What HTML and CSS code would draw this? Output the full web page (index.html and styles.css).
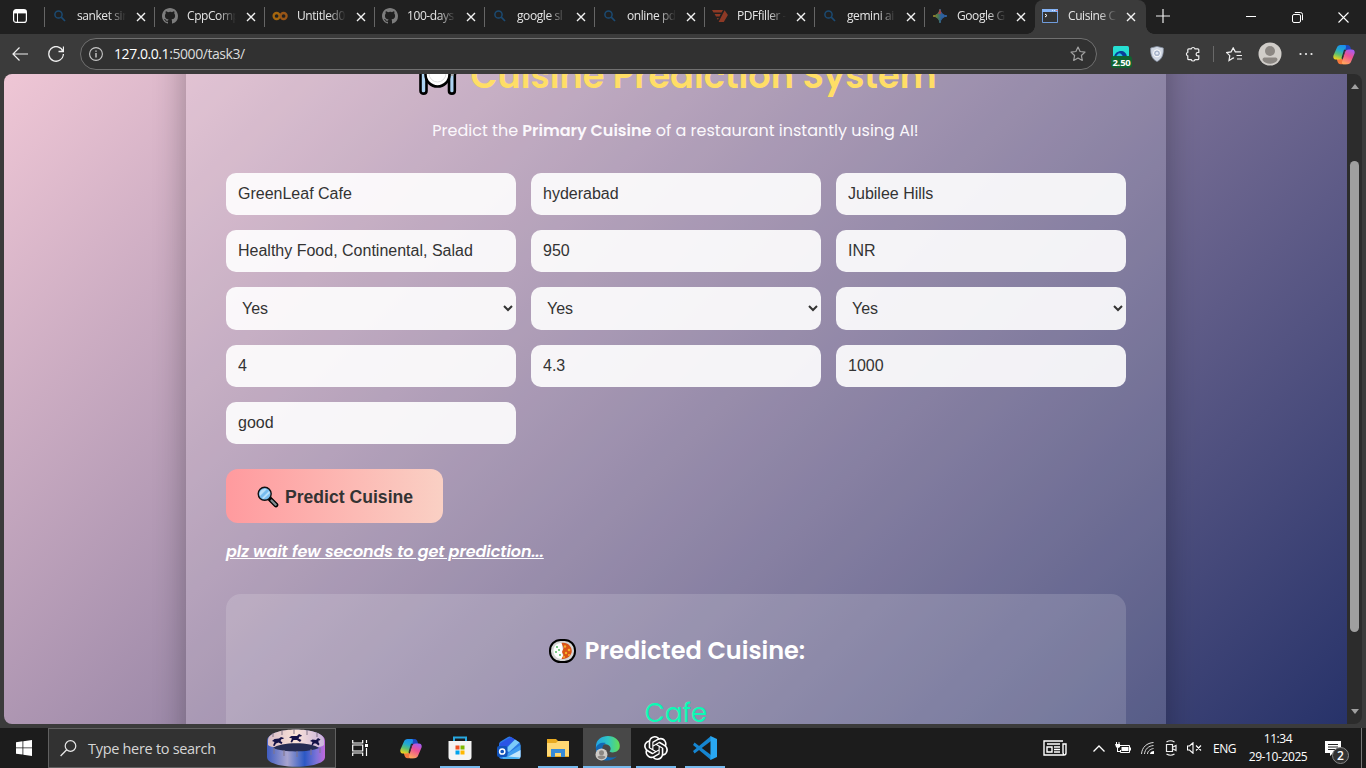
FILE: index.html
```html
<!DOCTYPE html>
<html lang="en">
<head>
<meta charset="utf-8">
<title>Cuisine Prediction System</title>
<link rel="stylesheet" href="styles.css">
</head>
<body>
<svg class="defs" aria-hidden="true">
  <defs>
    <linearGradient id="cpA" x1=".6" y1="0" x2=".3" y2="1"><stop offset="0" stop-color="#1b8fee"/><stop offset=".35" stop-color="#22a9cf"/><stop offset=".65" stop-color="#5cc072"/><stop offset="1" stop-color="#f2d31b"/></linearGradient>
    <linearGradient id="cpB" x1=".7" y1="0" x2=".3" y2="1"><stop offset="0" stop-color="#a45cf2"/><stop offset=".45" stop-color="#ee5093"/><stop offset="1" stop-color="#ffa45e"/></linearGradient>
    <linearGradient id="edgeG" x1="0" y1=".5" x2="1" y2=".5"><stop offset="0" stop-color="#23a4e4"/><stop offset=".5" stop-color="#2fc5c4"/><stop offset="1" stop-color="#65df52"/></linearGradient>
    <linearGradient id="gem" x1="0" y1="0" x2="1" y2="0"><stop offset="0" stop-color="#a88a22"/><stop offset=".35" stop-color="#4b7a52"/><stop offset=".6" stop-color="#2c5f9f"/><stop offset="1" stop-color="#3164a8"/></linearGradient>
    <linearGradient id="drum" x1="0" y1="0" x2="1" y2="0"><stop offset="0" stop-color="#3f5cc0"/><stop offset=".35" stop-color="#a8a4cf"/><stop offset=".65" stop-color="#2b58c4"/><stop offset=".85" stop-color="#7b73d8"/><stop offset="1" stop-color="#c268dc"/></linearGradient>
    <linearGradient id="drumTop" x1="0" y1="0" x2="1" y2="0"><stop offset="0" stop-color="#d9bcc6"/><stop offset=".5" stop-color="#fae3d8"/><stop offset="1" stop-color="#c9b3dc"/></linearGradient>
  </defs>
  <symbol id="magnify" viewBox="0 0 16 16"><circle cx="6.500" cy="6.500" r="3.600" fill="none" stroke="#1b4a72" stroke-width="1.500"/><path d="M9.200 9.200l3.800 3.800" stroke="#1b4a72" stroke-width="1.700"/></symbol>
  <symbol id="github" viewBox="0 0 16 16"><path fill="#7d7d7d" d="M8 0C3.58 0 0 3.58 0 8c0 3.54 2.29 6.53 5.47 7.59.4.07.55-.17.55-.38v-1.49c-2.01.37-2.53-.49-2.69-.94-.09-.23-.48-.94-.82-1.13-.28-.15-.68-.52-.01-.53.63-.01 1.08.58 1.23.82.72 1.21 1.87.87 2.33.66.07-.52.28-.87.51-1.07-1.78-.2-3.64-.89-3.64-3.95 0-.87.31-1.59.82-2.15-.08-.2-.36-1.02.08-2.12 0 0 .67-.21 2.2.82A7.6 7.6 0 0 1 8 3.86c.68 0 1.36.09 2 .27 1.53-1.04 2.2-.82 2.2-.82.44 1.1.16 1.92.08 2.12.51.56.82 1.27.82 2.15 0 3.07-1.87 3.75-3.65 3.95.29.25.54.73.54 1.48v2.2c0 .21.15.46.55.38A8 8 0 0 0 16 8c0-4.42-3.58-8-8-8z"/></symbol>
  <symbol id="close" viewBox="0 0 10 10"><path d="M1 1l8 8M9 1L1 9" stroke="#f4f4f4" stroke-width="1.4" fill="none"/></symbol>
  <symbol id="copilot" viewBox="0 0 24 22">
    <path d="M9 .5h6.500c2.600 0 3.200 1.500 3.700 3.200L20 6.500h-4.500C12 6.500 12 2 9 .5z" fill="#1c48c0"/>
    <path d="M15 21.500H8.500c-2.600 0-3.200-1.500-3.700-3.200L4 15.500h4.500c3.500 0 3.500 4.500 6.500 6z" fill="#f4793c"/>
    <path d="M4.200 3.500C5 1.500 6.300.5 8.200.5h4.500c1.300 0 1.800 1.200 1.300 3l-3 9.700c-.7 2-1.800 3.300-4.200 3.300H3.500C.7 16.500-.2 14.200.6 11.700z" fill="url(#cpA)"/>
    <path d="M19.800 18.500c-.8 2-2.100 3-4 3h-4.500c-1.300 0-1.800-1.200-1.300-3l3-9.700c.7-2 1.800-3.300 4.200-3.300h3.300c2.800 0 3.700 2.300 2.900 4.800z" fill="url(#cpB)"/>
    <path d="M12.700 5.800l-2.800 9.500" stroke="#2b2430" stroke-width="1.300"/>
  </symbol>
</svg>

<header class="tabstrip">
  <div class="workspace"><svg width="14" height="14" viewBox="0 0 14 14"><rect x=".6" y=".6" width="12.8" height="12.8" rx="2.5" fill="none" stroke="#fff" stroke-width="1.2"/><path d="M1 1h12v3.4H1z" fill="#fff"/><path d="M4.5 4v9" stroke="#fff"/></svg></div>
  <div class="tab"><svg class="fav"><use href="#magnify"/></svg><span class="tab-title">sanket sin</span><svg class="x"><use href="#close"/></svg></div>
  <div class="tab"><svg class="fav"><use href="#github"/></svg><span class="tab-title">CppComp</span><svg class="x"><use href="#close"/></svg></div>
  <div class="tab"><svg class="fav" viewBox="0 0 16 16"><g fill="none" stroke-width="2.3"><circle cx="4.6" cy="8" r="3" stroke="#a5660d"/><circle cx="11.6" cy="8" r="3" stroke="#985517"/></g></svg><span class="tab-title">Untitled0</span><svg class="x"><use href="#close"/></svg></div>
  <div class="tab"><svg class="fav"><use href="#github"/></svg><span class="tab-title">100-days</span><svg class="x"><use href="#close"/></svg></div>
  <div class="tab"><svg class="fav"><use href="#magnify"/></svg><span class="tab-title">google sl</span><svg class="x"><use href="#close"/></svg></div>
  <div class="tab"><svg class="fav"><use href="#magnify"/></svg><span class="tab-title">online pd</span><svg class="x"><use href="#close"/></svg></div>
  <div class="tab"><svg class="fav" viewBox="0 0 16 16"><path d="M0 2h11L9.600 4.500H1.500zM2.600 6h6.200L7.500 8.400H4zM4.800 10h2L5.900 12zM12.600 2.200l3.300 4.900-4.100 7H6.600z" fill="#8d3925"/></svg><span class="tab-title">PDFfiller -</span><svg class="x"><use href="#close"/></svg></div>
  <div class="tab"><svg class="fav"><use href="#magnify"/></svg><span class="tab-title">gemini ai</span><svg class="x"><use href="#close"/></svg></div>
  <div class="tab"><svg class="fav" viewBox="0 0 16 16"><path d="M8 1C8.700 5.200 10.800 7.300 15 8 10.800 8.700 8.700 10.800 8 15 7.300 10.800 5.200 8.700 1 8 5.200 7.300 7.300 5.200 8 1z" fill="url(#gem)" stroke="url(#gem)"/><path d="M8 1L9.500 5.500 6 6z" fill="#a94242"/></svg><span class="tab-title">Google G</span><svg class="x"><use href="#close"/></svg></div>
  <div class="tab active"><svg class="fav" viewBox="0 0 16 16"><path d="M.5 1.500h15v13H.5z" fill="#333" stroke="#6f9cdc"/><path d="M0 1h16v3H0z" fill="#84b2f4"/><path d="M10 2.500h1m1 0h1" stroke="#dce9ff"/><path d="M14 2h1.500v1H14z" fill="#e87070"/><path d="M3 6l2 1.500L3 9" stroke="#fff" fill="none"/></svg><span class="tab-title">Cuisine C</span><svg class="x"><use href="#close"/></svg></div>
  <div class="newtab"><svg width="14" height="14"><path d="M7 0v14M0 7h14" stroke="#eee" stroke-width="1.200"/></svg></div>
  <div class="winbtns">
    <span><svg width="10" height="10"><path d="M0 4.500h10" stroke="#fff"/></svg></span>
    <span><svg width="11" height="11"><rect x=".5" y="2.500" width="8" height="8" rx="1.500" fill="none" stroke="#fff"/><path d="M2.800.5h5.700a2 2 0 0 1 2 2v5.700" fill="none" stroke="#fff"/></svg></span>
    <span><svg width="11" height="11"><path d="M.5.5l10 10M10.500.5l-10 10" stroke="#fff" stroke-width="1.100"/></svg></span>
  </div>
</header>

<nav class="toolbar">
  <span class="tool nav"><svg width="16" height="14"><path d="M16 7H1M7.500.5L1 7l6.500 6.500" fill="none" stroke="#f0f0f0" stroke-width="1.200"/></svg></span>
  <span class="tool nav"><svg width="16" height="16"><path d="M15 5.500A7.300 7.300 0 1 0 15.400 8M15.500 .5v5h-5" fill="none" stroke="#f0f0f0" stroke-width="1.300"/></svg></span>
  <div class="address">
    <svg width="14" height="14"><circle cx="7" cy="7" r="6.400" fill="none" stroke="#c7c7c7" stroke-width="1.100"/><path d="M7 6v4.500M7 3.500v1.300" stroke="#d5d5d5" stroke-width="1.300"/></svg>
    <span class="url"><b>127.0.0.1</b>:5000/task3/</span>
    <svg class="star" width="16" height="16"><path d="M8 1l2.100 4.500 4.900.6-3.600 3.400.9 4.900L8 12l-4.300 2.400.9-4.900L1 6.100l4.900-.6z" fill="none" stroke="#a2a2a2" stroke-width="1.200" stroke-linejoin="round"/></svg>
  </div>
  <span class="tool ext"><svg width="16" height="16"><rect width="16" height="16" rx="1.500" fill="#26dfd2"/><path d="M1 11c1-7 12-9 13 0z" fill="#0b3f9a"/><path d="M3 11c2-5 5-5 7 0z" fill="#22c4e0"/></svg><em class="badge">2.50</em></span>
  <span class="tool"><svg width="14" height="16"><path d="M7 .4L13.300 2c.4 6-1 11-6.300 13.600C1.700 13 .3 8 .7 2z" fill="#d0d7e3" stroke="#848e9f" stroke-width=".8"/><circle cx="7" cy="7.300" r="3.500" fill="#a9b5cb" stroke="#fff"/><circle cx="7" cy="7.300" r="1.300" fill="#e6ebf5"/></svg></span>
  <span class="tool"><svg width="16" height="16"><path d="M3.800 2.800h2.400a2 1.900 0 0 1 3.800 0h2.800q1 0 1 1v2.700h-1a1.700 1.700 0 0 0 0 3.400h1v2.800q0 1-1 1H10a2 1.900 0 0 1-3.800 0H3.800q-1 0-1-1V10a2 2 0 0 1 0-3.800V3.800q0-1 1-1z" fill="none" stroke="#f0f0f0" stroke-width="1.200"/></svg></span>
  <span class="split"></span>
  <span class="tool"><svg width="16" height="15"><path d="M8 11.300L7.200 10.900 3 13.500l.8-4.800L.7 5.600l4.400-.7L7.200.9l2.100 4H15M10.500 8.500H16M11 12H16" fill="none" stroke="#f0f0f0" stroke-width="1.200"/></svg></span>
  <span class="tool"><svg width="24" height="24"><circle cx="12" cy="12" r="11.500" fill="#d0cdc9"/><circle cx="12" cy="9" r="5" fill="#8b8783"/><path d="M4.500 18c0-2.300 1-2.500 3-2.500h9c2 0 3 .2 3 2.500-3 5-12 5-15 0z" fill="#8b8783"/></svg></span>
  <span class="tool"><svg width="14" height="4"><g fill="#eee"><circle cx="1.500" cy="2" r="1.100"/><circle cx="7" cy="2" r="1.100"/><circle cx="12.500" cy="2" r="1.100"/></g></svg></span>
  <span class="tool last"><svg class="copilot"><use href="#copilot"/></svg></span>
</nav>

<div class="view">
  <main class="page">
    <section class="card">
      <h1><svg class="plate" viewBox="0 0 38 40"><g stroke="#000" stroke-width="2.600"><path d="M1.500 8c0-5 6-5 6 0v28c0 3.500-6 3.500-6 0z" fill="#add4f2"/><path d="M30 8c0-5 7-5 7 0v8l-1.200 4v16c0 3.500-5.800 3.500-5.800 0z" fill="#add4f2"/><circle cx="18.500" cy="19.500" r="12" fill="#fff"/></g><path d="M32 12l4 1-2 8h-2z" fill="#aaa"/><circle cx="18.500" cy="18.500" r="8.500" fill="#fff" stroke="#ddd"/></svg><span>Cuisine Prediction System</span></h1>
      <p class="lead">Predict the <strong>Primary Cuisine</strong> of a restaurant instantly using AI!</p>
      <form class="fields">
        <input value="GreenLeaf Cafe"><input value="hyderabad"><input value="Jubilee Hills">
        <input value="Healthy Food, Continental, Salad"><input value="950"><input value="INR">
        <select><option>Yes</option></select><select><option>Yes</option></select><select><option>Yes</option></select>
        <input value="4"><input value="4.3"><input value="1000">
        <input value="good">
      </form>
      <button class="predict"><svg width="22" height="22"><path d="M13 13l6 6" stroke="#000" stroke-width="4.600" stroke-linecap="round"/><path d="M14.500 14.500l4.200 4.200" stroke="#7f8d91" stroke-width="2.300" stroke-linecap="round"/><circle cx="7.700" cy="7.800" r="6.500" fill="#78bdf0" stroke="#111" stroke-width="1.400"/><path d="M3 10L10 3a5.500 5.500 0 0 0-7 7zM5 12l7-7 1 2-6.500 6z" fill="#b8e0fb"/></svg><span>Predict Cuisine</span></button>
      <p class="wait"><span>plz wait few seconds to get prediction...</span></p>
      <section class="result">
        <h2><svg width="27" height="24"><rect x="1" y="1" width="25" height="22" rx="10.500" fill="#d5d5d5" stroke="#000" stroke-width="2"/><path d="M13 4C7 3.500 4.500 8 4.500 12s3 8 8.500 8l1-3-1-3 1-3-1-3z" fill="#fff"/><path d="M12.500 4C19 3 22.800 8 22.800 12s-4 8.500-10.300 8l2-4-1.500-3 1.500-4z" fill="#d95417"/><g fill="#f6b32c"><circle cx="16" cy="7.500" r="1.200"/><circle cx="20" cy="11" r="1.300"/><circle cx="17" cy="14" r="1.200"/><circle cx="15" cy="18" r="1"/><circle cx="20" cy="16" r="1"/></g><g fill="#43b653"><circle cx="8" cy="8" r=".9"/><circle cx="7" cy="13" r=".9"/><circle cx="10" cy="11" r=".9"/><circle cx="11" cy="16" r=".9"/></g></svg><span>Predicted Cuisine:</span></h2>
        <p class="answer">Cafe</p>
      </section>
    </section>
  </main>
  <div class="scrollbar"><i class="up"></i><div class="track"><div class="thumb"></div></div><i class="down"></i></div>
</div>

<footer class="taskbar">
  <span class="start"><svg width="16" height="16"><path d="M0 2.200L6.500 1.300v6.200H0zM7.300 1.200L16 0v7.500H7.300zM0 8.300h6.500v6.300L0 13.700zM7.300 8.300H16V16l-8.700-1.200z" fill="#fff"/></svg></span>
  <div class="search">
    <svg width="17" height="17"><circle cx="10.500" cy="6" r="5.300" fill="none" stroke="#e8e8e8" stroke-width="1.200"/><path d="M6.700 9.800L.6 16" stroke="#e8e8e8" stroke-width="1.300"/></svg>
    <span>Type here to search</span>
    <svg class="carousel" width="58" height="38" viewBox="0 0 58 38"><path d="M0 12C0-3 58-3 58 12v16c0 13-58 13-58 0z" fill="url(#drum)"/><path d="M1 11C1-3 57-3 57 11v5c-5 5-51 5-56 0z" fill="url(#drumTop)"/><path d="M6 19c7-6.500 39-6.500 46 0-10 4.500-36 4.500-46 0z" fill="#252c53"/><g stroke="#817587"><path d="M27 0v5M6 4v4M15 1v5M40 1v5M50 4v4M17 21v6M30 22v6M44 20v6M7 19v6M53 19v5"/></g><g fill="#141247"><path d="M0 3.500L2.500 2 8 2 10 0l3 1.500-1 1-1.500 0-1 2 3 1.500-1.500 2L8 6 4.500 6 3 8.500 1.500 8 3 4.500z" transform="translate(22 5)"/><path d="M0 4L2.500 2 7 1.500 9 0l3 1-1 1-1.500 0-1 2 2 1.500-1 1.500L6.500 5.500 4 6.500 2.500 9 1 8.500 2.500 5z" transform="translate(5 8)"/><path d="M0 3L2.500 1.500 6 2 8 0l2.500 1.500-1 1-1 0 0 2 1 1.500-1 1.500L6 5.500 4 5.500 2.500 7.500 1.500 7 2.500 4z" transform="translate(43 9)"/></g></svg>
  </div>
  <span class="taskview"><svg width="17" height="16"><path d="M.7 0v3h10V0M.7 16v-3h10v3M.7 5h10v6H.7zM14.500 0v3M14.500 8v8" fill="none" stroke="#fff" stroke-width="1.200"/><path d="M13 4h3v3h-3z" fill="#fff"/></svg></span>
  <div class="apps">
    <span class="app"><svg class="copilot"><use href="#copilot"/></svg></span>
    <span class="app open"><svg width="24" height="24"><path d="M6 6V1.500h12V6" fill="none" stroke="#28a8df" stroke-width="2"/><path d="M.5 5h23v16q0 3-3 3h-17q-3 0-3-3z" fill="#f4f4f4"/><path d="M7.500 9.500h4v4h-4z" fill="#ef5023"/><path d="M12.500 9.500h4v4h-4z" fill="#7fb900"/><path d="M7.500 14.500h4v4h-4z" fill="#00a3ed"/><path d="M12.500 14.500h4v4h-4z" fill="#ffb800"/></svg></span>
    <span class="app"><svg width="24" height="24"><path d="M2 8q0-1.500 1.500-2.500L11 1q1.500-1 3 0l8 5q1.500 1 1.500 3v11q0 3-3 3H5q-3 0-3-3z" fill="#2b7be4"/><path d="M2 8L14 1l4 2.500L6 14z" fill="#2a55e6"/><path d="M8 14L18 3.500l4.500 3L12 16z" fill="#7ccbfa"/><path d="M23.500 9v11q0 3-3 3H9l-2-3z" fill="#3f9df0"/><path d="M23.500 14v6q0 3-3 3H7z" fill="#c3e6fc"/><path d="M5 20l18 1.500q-1 1.500-3 1.500H6z" fill="#49b0f2"/><rect y="10" width="10.500" height="11" rx="2" fill="#1153bb"/><circle cx="5.200" cy="15.500" r="2.600" fill="none" stroke="#fff" stroke-width="1.500"/></svg></span>
    <span class="app open"><svg width="22" height="18"><path d="M0 0h9l2 2h11v16H0z" fill="#e9aa20"/><path d="M0 4h9l2-2h11v15H0z" fill="#ffd873"/><path d="M4 18v-8h14v8h-4v-4H8v4z" fill="#378bd8"/></svg></span>
    <span class="app current"><svg width="25" height="25"><path d="M1 13C0 4 6 0 13 0c8 0 13 6 11.500 12-1 4-7 5.500-10 3.500 2-2 1.500-6-2.500-7C7 7.500 2 9 1 13z" fill="url(#edgeG)"/><path d="M1 12c1-4 5-6 10-5-5 2-5 10 0 13 4 2 8 2 11 0-5 7-22 7-21-8z" fill="#1269b5"/><circle cx="6.500" cy="18.500" r="6" fill="#cecac6"/><circle cx="6.500" cy="16.800" r="2.500" fill="#8c8783"/><path d="M2.500 21c1-2 7-2 8 0-2 3-6 3-8 0z" fill="#8c8783"/></svg></span>
    <span class="app open"><svg width="24" height="24" viewBox="0 0 24 24"><path fill="#fff" d="M22.2819 9.8211a5.9847 5.9847 0 0 0-.5157-4.9108 6.0462 6.0462 0 0 0-6.5098-2.9A6.0651 6.0651 0 0 0 4.9807 4.1818a5.9847 5.9847 0 0 0-3.9977 2.9 6.0462 6.0462 0 0 0 .7427 7.0966 5.98 5.98 0 0 0 .511 4.9107 6.051 6.051 0 0 0 6.5146 2.9001A5.9847 5.9847 0 0 0 13.2599 24a6.0557 6.0557 0 0 0 5.7718-4.2058 5.9894 5.9894 0 0 0 3.9977-2.9001 6.0557 6.0557 0 0 0-.7475-7.0729zm-9.022 12.6081a4.4755 4.4755 0 0 1-2.8764-1.0408l.1419-.0804 4.7783-2.7582a.7948.7948 0 0 0 .3927-.6813v-6.7369l2.02 1.1686a.071.071 0 0 1 .038.052v5.5826a4.504 4.504 0 0 1-4.4945 4.4944zm-9.6607-4.1254a4.4708 4.4708 0 0 1-.5346-3.0137l.142.0852 4.783 2.7582a.7712.7712 0 0 0 .7806 0l5.8428-3.3685v2.3324a.0804.0804 0 0 1-.0332.0615L9.74 19.9502a4.4992 4.4992 0 0 1-6.1408-1.6464zM2.3408 7.8956a4.485 4.485 0 0 1 2.3655-1.9728V11.6a.7664.7664 0 0 0 .3879.6765l5.8144 3.3543-2.0201 1.1685a.0757.0757 0 0 1-.071 0l-4.8303-2.7865A4.504 4.504 0 0 1 2.3408 7.872zm16.5963 3.8558L13.1038 8.364 15.1192 7.2a.0757.0757 0 0 1 .071 0l4.8303 2.7913a4.4944 4.4944 0 0 1-.6765 8.1042v-5.6772a.79.79 0 0 0-.407-.667zm2.0107-3.0231l-.142-.0852-4.7735-2.7818a.7759.7759 0 0 0-.7854 0L9.409 9.2297V6.8974a.0662.0662 0 0 1 .0284-.0615l4.8303-2.7866a4.4992 4.4992 0 0 1 6.6802 4.66zM8.3065 12.863l-2.02-1.1638a.0804.0804 0 0 1-.038-.0567V6.0742a4.4992 4.4992 0 0 1 7.3757-3.4537l-.142.0805L8.704 5.459a.7948.7948 0 0 0-.3927.6813zm1.0976-2.3654l2.602-1.4998 2.6069 1.4998v2.9994l-2.5974 1.4997-2.6067-1.4997Z"/></svg></span>
    <span class="app open"><svg width="24" height="24"><path d="M1.500 6.500L18 19v5L0 9z" fill="#1686d1"/><path d="M1.500 17.500L18 5V0L0 15z" fill="#1686d1"/><path d="M17.500 0L24 3v18l-6.500 3z" fill="#29a7f1"/></svg></span>
  </div>
  <div class="tray">
    <span class="news"><svg width="24" height="16"><path d="M20 1H1v14h20q2 0 2-2V4h-3v9q0 1 1 1M4 4h13M11 7h6M11 9.500h6M11 12h6" fill="none" stroke="#fff" stroke-width="1.400"/><path d="M4 7h5v5H4z" fill="none" stroke="#fff" stroke-width="1.400"/></svg></span>
    <span class="chev"><svg width="12" height="7"><path d="M.5 6.500L6 1l5.500 5.500" fill="none" stroke="#fff" stroke-width="1.300"/></svg></span>
    <span class="t"><svg width="17" height="12"><path d="M5 3.500h9.500v7H5.500V8" fill="none" stroke="#fff"/><path d="M6.500 5h7v4h-7zM15 5.500h1v3h-1zM0 2h5v3q-2.500 2-4 0zM1 0h1v2H1zM3.500 0h1v2h-1zM2 6h1v3h3v1H2z" fill="#fff"/></svg></span>
    <span class="t"><svg width="13" height="12"><g fill="none" stroke="#ddd"><path d="M.5 12C1 5 6 1 12.500.5M3.500 12c.5-5 4-8 9-8.500M6.500 12c0-3 3-5 6-5.500" /></g><path d="M9 12c0-2 2-3 4-3v3z" fill="#fff"/></svg></span>
    <span class="t"><svg width="12" height="16"><path d="M1.500 4.500h6v7h-6zM8 7l3-1.500v5L8 9M1.500 2q4-2.500 8 0M1.500 14q4 2.500 8 0" fill="none" stroke="#eee" stroke-width="1.200"/></svg></span>
    <span class="t"><svg width="15" height="12"><path d="M.5 4h2L6 .8v10.400L2.500 8h-2zM9 3.500l5 5M14 3.500l-5 5" fill="none" stroke="#fff" stroke-width="1.100"/></svg></span>
    <span class="lang">ENG</span>
    <span class="clock"><span class="hour">11:34</span><span>29-10-2025</span></span>
    <span class="notify"><svg width="16" height="15"><path d="M0 0h16v12H8l-3 3v-3H0z" fill="#fff"/><path d="M3 3.500h10M3 6h10M3 8.500h7" stroke="#222"/></svg><em>2</em></span>
    <span class="desk"></span>
  </div>
</footer>
</body>
</html>
```
FILE: styles.css
```css
* { box-sizing: border-box; }
body { margin: 0; width: 1366px; height: 768px; overflow: hidden; display: flex; flex-direction: column; background: #3b3b3b; color: #fff; font-family: "Segoe UI", "Open Sans", sans-serif; }
svg { display: block; flex: none; }
.defs { width: 0; height: 0; position: absolute; }

.tabstrip { height: 34px; flex: none; display: flex; background: #202020; }
.workspace { width: 45px; padding: 9px 0 0 13px; }
.tab { width: 110px; display: flex; align-items: center; padding: 0 0 2px 7px; position: relative; }
.tab::before { content: ""; position: absolute; left: -1px; top: 7px; width: 1px; height: 20px; background: #666; }
.fav { width: 16px; height: 16px; margin-right: 9px; }
.tab-title { width: 50px; white-space: nowrap; font-size: 12px; letter-spacing: -.42px; line-height: 20px; color: #e5e5e5; mask-image: linear-gradient(90deg, #000 62%, transparent 98%); }
.x { width: 10px; height: 10px; margin-left: 8.5px; margin-top: 1px; }
.tab.active { width: 111px; border-radius: 8px 8px 0 0; background: #3b3b3b; }
.active .fav { margin-right: 10px; }
.active .x { margin-left: 7.5px; }
.tab.active::before { left: -8px; top: 26px; width: 8px; height: 8px; background: radial-gradient(circle at 0 0, transparent 7.5px, #3b3b3b 8px); }
.tab.active::after { content: ""; position: absolute; left: 111px; top: 26px; width: 8px; height: 8px; background: radial-gradient(circle at 8px 0, transparent 7.5px, #3b3b3b 8px); }
.newtab { padding: 9px 0 0 10px; flex: 1; }
.winbtns { display: flex; }
.winbtns span { width: 46px; display: grid; place-items: center; }

.toolbar { height: 40px; flex: none; display: flex; align-items: center; padding-left: 2px; }
.tool { width: 36px; height: 36px; display: grid; place-items: center; position: relative; }
.tool.last { width: 39px; }
.address { width: 1017px; height: 32px; margin: 0 6px; border: 1px solid #707070; border-radius: 16px; background: #313131; display: flex; align-items: center; padding: 0 10px 0 8px; }
.url { margin-left: 11px; flex: 1; font-size: 14px; letter-spacing: -.43px; line-height: 20px; padding-bottom: 1px; color: #dcdcdc; }
.url b { font-weight: 400; color: #fff; }
.badge { position: absolute; left: 8px; top: 20px; width: 21px; height: 12px; border-radius: 3px; background: #116330; font: 700 9.5px/13px "Open Sans", sans-serif; text-align: center; letter-spacing: -.2px; }
.split { width: 1px; height: 16px; margin: 0 2px; background: #696969; }
.copilot { width: 22px; height: 21px; }

.view { height: 650px; flex: none; margin: 0 4px; display: flex; border-radius: 8px; overflow: hidden; }
.page { width: 1343px; height: 842px; margin-top: -90px; flex: none; overflow: hidden; background: linear-gradient(135deg, #f8cdda, #1d2b64); font-family: Poppins, sans-serif; }
.card { width: 980px; height: 802px; margin: 20px 0 0 182px; padding: 41px 40px 0; background: rgba(255,255,255,.15); border-radius: 20px; box-shadow: 0 8px 32px rgba(0,0,0,.3); }
h1 { margin: 0; height: 60px; padding-left: 4px; display: flex; align-items: center; justify-content: center; gap: 13px; color: #ffde66; font-size: 35.2px; font-weight: 600; white-space: nowrap; }
.plate { width: 38px; height: 40px; }
.lead { margin: 14px 1px 30px 0; height: 24px; line-height: 24px; text-align: center; font-size: 16px; white-space: nowrap; color: #fbf8fc; }
.lead strong { font-weight: 600; }
.fields { display: grid; grid-template-columns: repeat(3, 290px); grid-template-rows: 42px 42px 43px 42px 42px; gap: 15px; }
input, select { width: 100%; height: 100%; padding: 12px; border: 0; border-radius: 10px; background: rgba(255,255,255,.9); color: #333; font: 16px Arial, "Liberation Sans", sans-serif; }
.predict { margin-top: 25px; width: 217px; height: 54px; border: 0; border-radius: 12px; padding: 2px 0 0 31px; display: flex; align-items: center; gap: 6px; background: linear-gradient(90deg, #ff9a9e, #fad0c4); color: #333; font: 700 17.6px Arial, "Liberation Sans", sans-serif; white-space: nowrap; }
.wait { margin: 17px 0 30px; height: 24px; line-height: 24px; font-size: 16px; font-weight: 600; font-style: italic; letter-spacing: -.07px; text-decoration: underline; white-space: nowrap; }
.result { height: 220px; border-radius: 15px; background: rgba(255,255,255,.15); padding-top: 37px; text-align: center; }
h2 { margin: 0; height: 38px; padding-left: 2px; display: flex; align-items: center; justify-content: center; gap: 9px; font-size: 24px; font-weight: 600; white-space: nowrap; }
h2 svg { margin-top: 2px; }
.answer { margin: 24px 0 0; height: 40px; line-height: 40px; color: #0dfab5; font-size: 26px; }
.scrollbar { width: 15px; background: #2c2c2c; display: flex; flex-direction: column; align-items: center; padding: 10px 0; }
.up, .down { width: 0; height: 0; border: 4.5px solid transparent; border-top: 0; border-bottom: 5px solid #a0a0a0; }
.down { border-bottom: 0; border-top: 5px solid #a0a0a0; }
.track { flex: 1; padding-top: 72px; }
.thumb { width: 9px; height: 471px; border-radius: 4.5px; background: #9f9f9f; }

.taskbar { height: 40px; margin-top: 4px; flex: none; display: flex; background: #1c1c1c; }
.start, .taskview { width: 48px; display: grid; place-items: center; }
.search { width: 288px; border: 1px solid #606060; background: #323232; display: flex; align-items: center; padding-left: 11px; gap: 11px; }
.search span { width: 168px; font-size: 14.5px; letter-spacing: -.3px; color: #d6d6d6; white-space: nowrap; }
.apps { display: flex; gap: 1px; margin-left: 3px; }
.app { width: 48px; height: 40px; display: grid; place-items: center; position: relative; }
.open::after, .current::after { content: ""; position: absolute; left: 4px; right: 4px; bottom: 0; height: 2px; background: #76b9ed; }
.current { background: #484848; }
.current::after { left: 0; right: 0; }
.tray { margin-left: auto; display: flex; align-items: center; height: 40px; }
.news { width: 50px; }
.chev { width: 19px; }
.t { width: 23.5px; display: grid; place-items: center; }
.lang { width: 35px; margin-left: 7px; font-size: 12px; letter-spacing: -.5px; }
.clock { width: 60px; margin-right: 1px; font-size: 12px; line-height: 18px; letter-spacing: -.4px; display: flex; flex-direction: column; align-items: center; white-space: nowrap; }
.notify { width: 36px; margin-left: 16px; position: relative; }
.notify em { position: absolute; left: 7px; top: 6px; width: 17px; height: 17px; border: 1px solid #888; border-radius: 50%; background: #333; font: 600 12px/15px "Open Sans", sans-serif; text-align: center; }
.desk { width: 5px; height: 40px; border-left: 1px solid #777; }
```
